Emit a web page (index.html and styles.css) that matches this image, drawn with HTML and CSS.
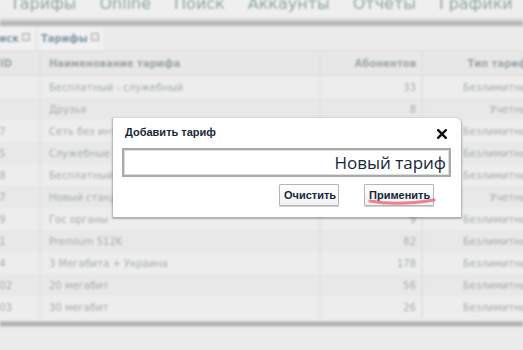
FILE: index.html
```html
<!DOCTYPE html>
<html lang="ru">
<head>
<meta charset="utf-8">
<title>Тарифы</title>
<link rel="stylesheet" href="styles.css">
</head>
<body>
<div class="page">
  <nav class="menu">
    <span class="menu-item">Тарифы</span>
    <span class="menu-item">Online</span>
    <span class="menu-item">Поиск</span>
    <span class="menu-item">Аккаунты</span>
    <span class="menu-item">Отчеты</span>
    <span class="menu-item">Графики</span>
  </nav>
  <div class="menu-line"></div>
  <div class="shadow-bar"></div>
  <div class="tabs">
    <div class="tab tab-first">Поиск <span class="cb"></span></div>
    <div class="tab">Тарифы <span class="cb"></span></div>
  </div>
  <table class="grid">
    <colgroup>
      <col class="c-id"><col class="c-name"><col class="c-subs"><col class="c-type">
    </colgroup>
    <thead>
      <tr><th class="id">ID</th><th class="name">Наименование тарифа</th><th class="num">Абонентов</th><th class="type">Тип тарифа</th></tr>
    </thead>
    <tbody>
      <tr><td class="id">1</td><td>Бесплатный - служебный</td><td class="num">33</td><td class="type">Безлимитный</td></tr>
      <tr class="alt"><td class="id">2</td><td>Друзья</td><td class="num">8</td><td class="type">Учетный</td></tr>
      <tr><td class="id">17</td><td>Сеть без интернета</td><td class="num">4</td><td class="type">Безлимитный</td></tr>
      <tr class="alt"><td class="id">15</td><td>Служебные</td><td class="num">12</td><td class="type">Безлимитный</td></tr>
      <tr><td class="id">18</td><td>Бесплатный</td><td class="num">6</td><td class="type">Безлимитный</td></tr>
      <tr class="alt"><td class="id">17</td><td>Новый стандарт</td><td class="num">3</td><td class="type">Учетный</td></tr>
      <tr><td class="id">19</td><td>Гос органы</td><td class="num">9</td><td class="type">Безлимитный</td></tr>
      <tr class="alt"><td class="id">21</td><td>Premium 512K</td><td class="num">82</td><td class="type">Безлимитный</td></tr>
      <tr><td class="id">24</td><td>3 Мегабита + Украина</td><td class="num">178</td><td class="type">Безлимитный</td></tr>
      <tr class="alt"><td class="id">102</td><td>20 мегабит</td><td class="num">56</td><td class="type">Безлимитный</td></tr>
      <tr><td class="id">103</td><td>30 мегабит</td><td class="num">26</td><td class="type">Безлимитный</td></tr>
    </tbody>
  </table>
  <div class="bottom-bar"></div>
</div>

<div class="dialog">
  <div class="dialog-head">
    <span class="dialog-title">Добавить тариф</span>
    <svg class="close" width="10" height="10" viewBox="0 0 10 10"><path d="M1.2 1.2 L8.8 8.8 M8.8 1.2 L1.2 8.8" stroke="#111" stroke-width="2.4" stroke-linecap="square"/></svg>
  </div>
  <div class="field">Новый тариф</div>
  <div class="actions">
    <button class="btn">Очистить</button>
    <button class="btn btn-apply">Применить<svg class="mark" width="70" height="10" viewBox="0 0 70 10"><path d="M3 4 Q 30 9 67 3" stroke="#ee5a70" stroke-opacity="0.75" stroke-width="3.2" fill="none" stroke-linecap="round"/></svg></button>
  </div>
</div>
</body>
</html>
```

FILE: styles.css
```css
html, body {
  margin: 0;
  padding: 0;
}
body {
  width: 523px;
  height: 350px;
  overflow: hidden;
  background: #ececec;
  position: relative;
}
.page {
  filter: blur(0.85px);
  font-family: "DejaVu Sans", Verdana, sans-serif;
  background: #ececec;
  height: 350px;
}
.menu {
  display: flex;
  gap: 23px;
  margin-top: -6px;
  padding-left: 10px;
  height: 23px;
  font-size: 16px;
  line-height: 20px;
  color: #94a4a4;
  background: #efefef;
  white-space: nowrap;
}
.menu-line {
  height: 3px;
  background: #e3e3e3;
}
.shadow-bar {
  height: 7px;
  background: linear-gradient(#d2d2d2, #afafaf 45%, #c2c2c2 75%, #e2e2e2);
}
.tabs {
  display: flex;
  gap: 5px;
  height: 23px;
  margin-left: -16px;
  background: #ebebeb;
  border-bottom: 2px solid #e2e2e2;
}
.tab {
  display: flex;
  align-items: center;
  gap: 3px;
  padding: 0 4px 0 2px;
  font-size: 10px;
  font-weight: bold;
  color: #7f94a2;
  background: #f1f1f1;
}
.tab-first { padding-left: 0; }
.cb {
  width: 6px;
  height: 6px;
  border: 1px solid #aaaaaa;
  background: #e8e8e8;
  margin-top: -4px;
}
.grid {
  border-collapse: collapse;
  table-layout: fixed;
  width: 553px;
  margin-left: -13px;
  font-size: 10px;
  color: #a6aeae;
}
.c-id { width: 53px; }
.c-name { width: 280px; }
.c-subs { width: 102px; }
.c-type { width: 118px; }
.grid th, .grid td {
  height: 22px;
  padding: 0 5px 0 8px;
  text-align: left;
  white-space: nowrap;
  overflow: hidden;
  border-left: 2px solid #e2e2e2;
}
.grid th:first-child, .grid td:first-child { border-left: none; }
.grid th {
  height: 23px;
  font-weight: bold;
  color: #9ca5aa;
  background: #e7e7e7;
  border-bottom: 1px solid #dadada;
}
.grid td.id { padding-left: 6px; }
.grid th.id { padding-left: 13px; }
.grid .num { text-align: right; }
.grid .type { text-align: right; }
.grid tbody tr { background: #ededed; }
.grid tbody tr.alt { background: #e8e8e8; }
.bottom-bar {
  height: 6px;
  margin-top: 3px;
  background: linear-gradient(#c8c8c8, #a8a8a8 50%, #d0d0d0);
}

.dialog {
  position: absolute;
  left: 113px;
  top: 118px;
  width: 348px;
  height: 99px;
  box-sizing: border-box;
  padding: 6px 10px 0 9px;
  background: #ffffff;
  border-radius: 0 5px 0 0;
  box-shadow: 0 1px 2px 1px rgba(0, 0, 0, 0.28);
  font-family: "Liberation Sans", Arial, sans-serif;
}
.dialog-head {
  display: flex;
  align-items: center;
  justify-content: space-between;
  height: 16px;
  padding-left: 3px;
}
.dialog-title {
  font-size: 11px;
  font-weight: bold;
  color: #15283a;
}
.close { margin-right: 4px; margin-top: 3px; }
.field {
  margin-top: 8px;
  height: 29px;
  box-sizing: border-box;
  border: 2px solid #a9a9a9;
  box-shadow: inset 0 0 0 1px #dedede;
  padding: 0 3px 0 0;
  text-align: right;
  font-family: "Open Sans", "Liberation Sans", sans-serif;
  font-size: 17px;
  line-height: 25px;
  color: #15283a;
}
.actions {
  display: flex;
  justify-content: flex-end;
  gap: 25px;
  margin-top: 7px;
  padding-right: 17px;
}
.btn {
  position: relative;
  height: 22px;
  padding: 0 4px;
  font-family: "Liberation Sans", Arial, sans-serif;
  font-size: 11px;
  font-weight: bold;
  color: #15283a;
  background: linear-gradient(#ffffff, #f1f1f1);
  border: 1px solid #b5b5b5;
  border-radius: 1px;
  box-shadow: 0 1px 0 #d0d0d0;
}
.btn:first-child { width: 60px; }
.btn-apply { width: 70px; }
.mark {
  position: absolute;
  left: 2px;
  top: 12px;
  filter: blur(0.5px);
}
```
